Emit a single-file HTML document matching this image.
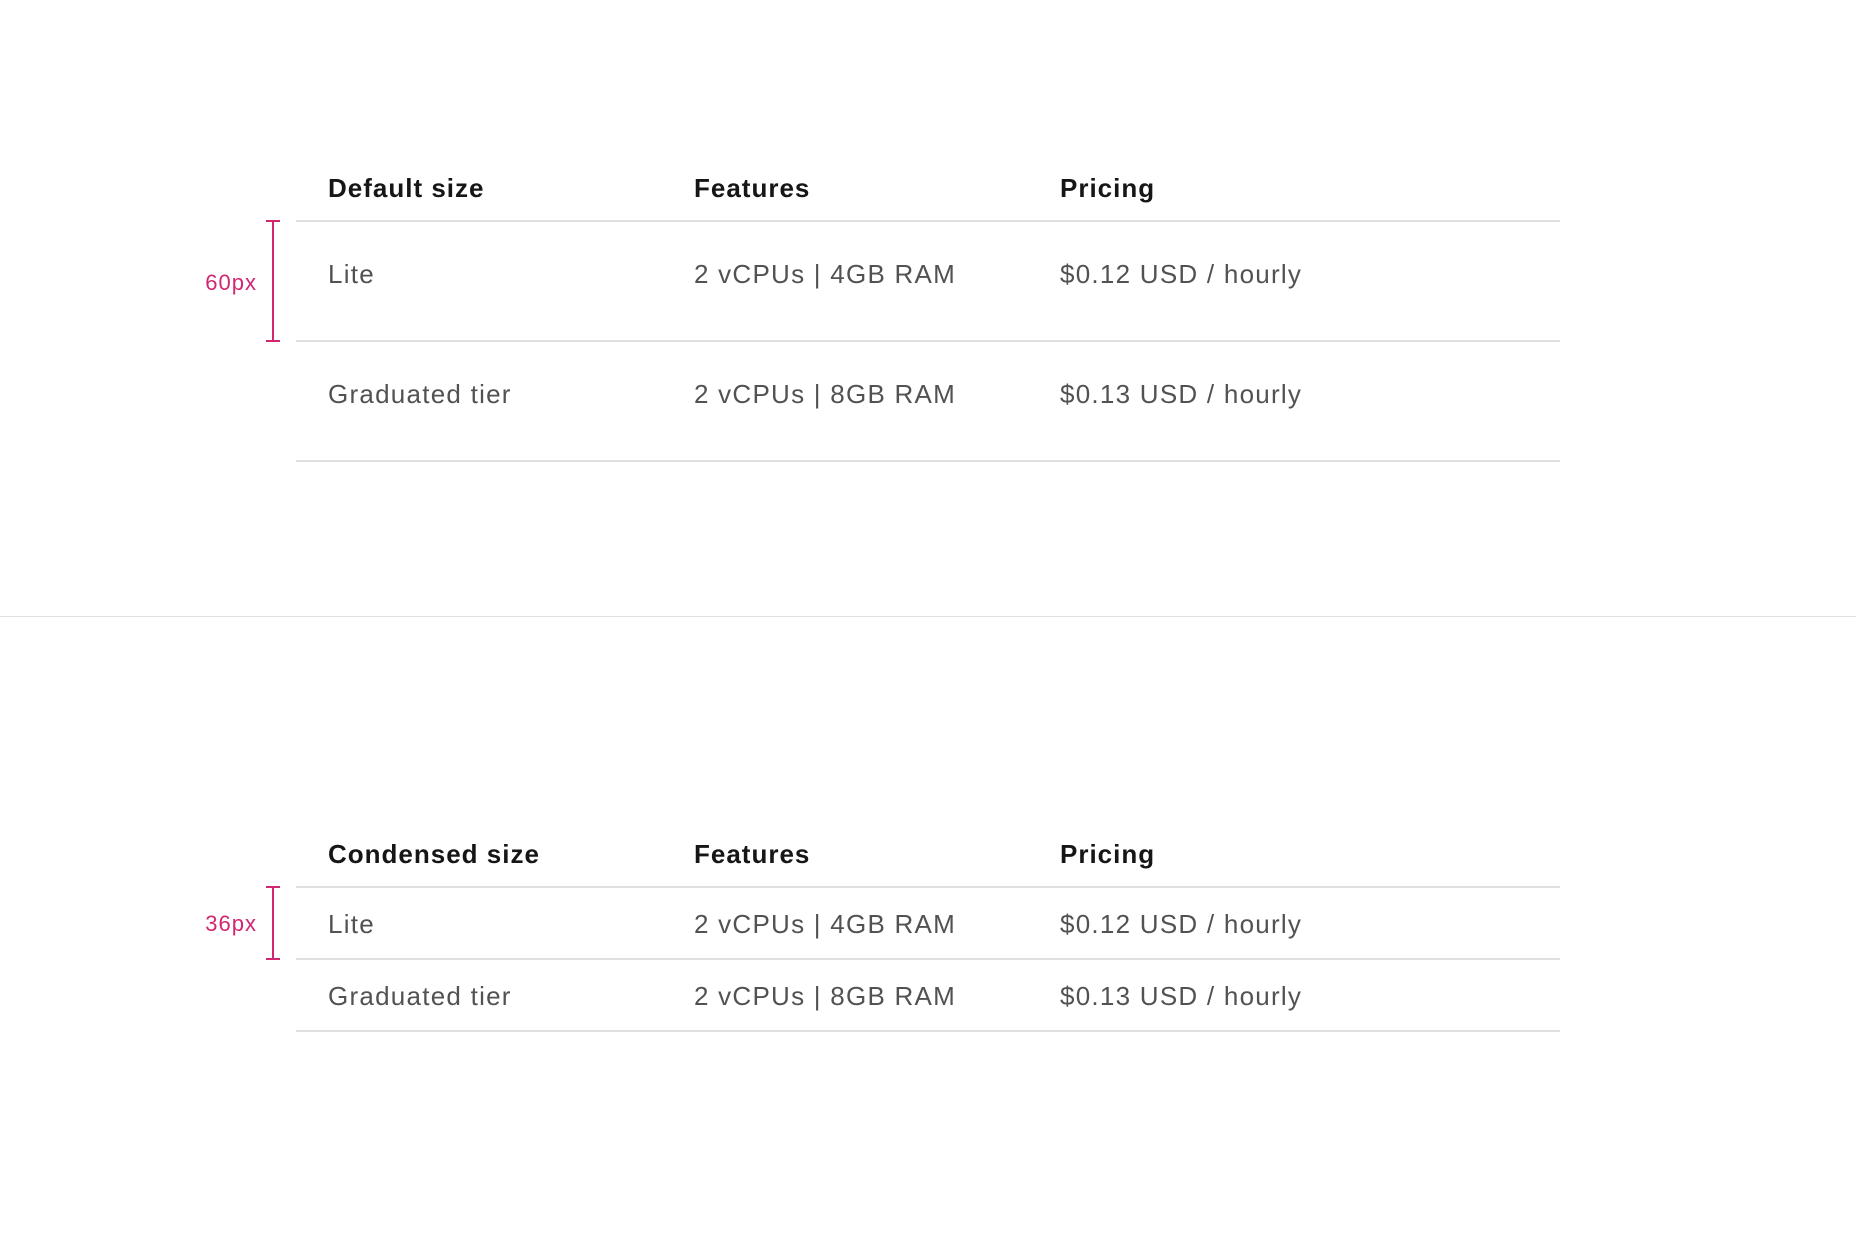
<!DOCTYPE html>
<html><head><meta charset="utf-8"><style>
html,body{margin:0;padding:0;background:#fff;}
body{width:1856px;height:1236px;position:relative;overflow:hidden;font-family:"Liberation Sans",sans-serif;}
.t{position:absolute;white-space:nowrap;line-height:1;transform:translateY(-50%);}
.h{font-size:26px;font-weight:bold;color:#161616;letter-spacing:1px;}
.b{font-size:26px;color:#525252;letter-spacing:1.25px;}
.l{position:absolute;left:296px;width:1264px;height:2px;background:#e0e0e0;}
.m{font-size:22px;color:#d12771;letter-spacing:1px;right:1599px;}
.v{position:absolute;left:272px;width:2px;background:#d12771;}
.c{position:absolute;left:266px;width:14px;height:2px;background:#d12771;}
</style></head><body>
<div class="t h" style="left:328px;top:188px">Default size</div>
<div class="t h" style="left:694px;top:188px">Features</div>
<div class="t h" style="left:1060px;top:188px">Pricing</div>
<div class="l" style="top:220px"></div>
<div class="t b" style="left:328px;top:274px">Lite</div>
<div class="t b" style="left:694px;top:274px">2 vCPUs | 4GB RAM</div>
<div class="t b" style="left:1060px;top:274px">$0.12 USD / hourly</div>
<div class="l" style="top:340px"></div>
<div class="t b" style="left:328px;top:394px">Graduated tier</div>
<div class="t b" style="left:694px;top:394px">2 vCPUs | 8GB RAM</div>
<div class="t b" style="left:1060px;top:394px">$0.13 USD / hourly</div>
<div class="l" style="top:460px"></div>
<div class="v" style="top:221px;height:120px"></div>
<div class="c" style="top:220px"></div><div class="c" style="top:340px"></div>
<div class="t m" style="top:283px">60px</div>

<div style="position:absolute;left:0;top:616px;width:1856px;height:1px;background:#e0e0e0"></div>

<div class="t h" style="left:328px;top:854px">Condensed size</div>
<div class="t h" style="left:694px;top:854px">Features</div>
<div class="t h" style="left:1060px;top:854px">Pricing</div>
<div class="l" style="top:886px"></div>
<div class="t b" style="left:328px;top:924px">Lite</div>
<div class="t b" style="left:694px;top:924px">2 vCPUs | 4GB RAM</div>
<div class="t b" style="left:1060px;top:924px">$0.12 USD / hourly</div>
<div class="l" style="top:958px"></div>
<div class="t b" style="left:328px;top:996px">Graduated tier</div>
<div class="t b" style="left:694px;top:996px">2 vCPUs | 8GB RAM</div>
<div class="t b" style="left:1060px;top:996px">$0.13 USD / hourly</div>
<div class="l" style="top:1030px"></div>
<div class="v" style="top:887px;height:72px"></div>
<div class="c" style="top:886px"></div><div class="c" style="top:958px"></div>
<div class="t m" style="top:924px">36px</div>
</body></html>
